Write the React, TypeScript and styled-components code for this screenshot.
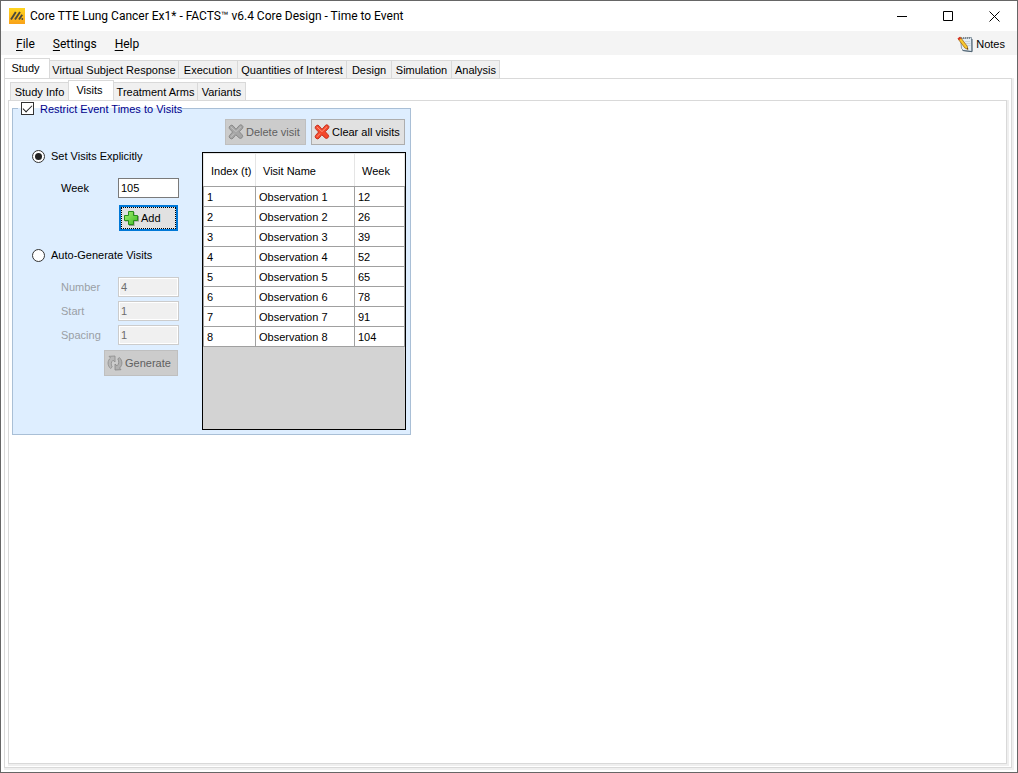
import React, { useState } from "react";
import styled, { createGlobalStyle } from "styled-components";

const GlobalStyle = createGlobalStyle`
  *, *::before, *::after { box-sizing: border-box; }
  body { margin: 0; background: #fff; }
  button, input, table { font: inherit; color: inherit; }
`;

const Window = styled.div`
  display: flex;
  flex-direction: column;
  min-height: 100vh;
  border: 1px solid #666;
  background: #fff;
  color: #000;
  font: 11px/16px "Liberation Sans", Arial, sans-serif;
`;

const TitleBar = styled.header`
  display: flex;
  align-items: center;
  height: 30px;
  padding-left: 8px;
`;

const Title = styled.h1`
  flex: 1;
  margin: 0 0 0 5px;
  font: 400 12px/16px Roboto, "Segoe UI", sans-serif;
  white-space: nowrap;
`;

const WindowControls = styled.div`
  display: flex;
`;

const WindowButton = styled.button`
  display: grid;
  place-items: center;
  width: 46px;
  height: 30px;
  padding: 0;
  border: 0;
  background: none;
`;

const MenuBar = styled.nav`
  display: flex;
  align-items: center;
  gap: 18px;
  height: 24px;
  padding: 2px 12px 0 15px;
  background: #f4f4f4;
`;

const MenuButton = styled.button`
  padding: 0;
  border: 0;
  background: none;
  font: 12px/16px Roboto, "Segoe UI", sans-serif;
  white-space: nowrap;

  u { text-underline-offset: 2px; }
`;

const NotesButton = styled.button`
  display: flex;
  align-items: center;
  gap: 3px;
  margin-left: auto;
  padding: 0;
  border: 0;
  background: none;
`;

const Workspace = styled.main`
  display: flex;
  flex: 1;
  flex-direction: column;
  padding: 3px 5px 4px 3px;
`;

const TabList = styled.div<{ $inset?: boolean }>`
  display: flex;
  align-items: flex-end;
  height: 21px;
  margin-bottom: -1px;
  padding-left: ${(p) => (p.$inset ? 2 : 0)}px;
`;

const TabButton = styled.button<{ $active: boolean; $width: number }>`
  width: ${(p) => p.$width}px;
  height: ${(p) => (p.$active ? 21 : 19)}px;
  margin-right: -1px;
  padding: ${(p) => (p.$active ? "0 3px 2px 0" : "0")};
  border: 1px solid #d9d9d9;
  border-bottom-color: ${(p) => (p.$active ? "#fff" : "#d9d9d9")};
  background: ${(p) => (p.$active ? "#fff" : "#f0f0f0")};
  line-height: 16px;
  white-space: nowrap;
`;

const TabPanel = styled.section<{ $outer?: boolean }>`
  display: flex;
  flex: 1;
  flex-direction: column;
  align-items: ${(p) => (p.$outer ? "stretch" : "flex-start")};
  padding: ${(p) => (p.$outer ? "1px 4px 3px 3px" : "0 3px")};
  border: 1px solid #d9d9d9;
  box-shadow: 1px 1px 0 1px #efefef;
  background: #fff;
`;

const VisitsGroup = styled.fieldset`
  display: flex;
  margin: 0;
  padding: 3px 4px 4px 0;
  border: 1px solid #a9bfd6;
  background: #deeeff;
`;

const GroupLegend = styled.legend`
  height: 15px;
  margin-left: 5px;
  padding: 0 0 0 3px;
  color: #00008b;
`;

const CheckLabel = styled.label`
  display: flex;
  align-items: center;
  gap: 6px;
  height: 15px;
`;

const CheckBox = styled.input`
  appearance: none;
  display: grid;
  place-items: center;
  width: 13px;
  height: 13px;
  margin: 0;
  border: 1px solid #333;
  background: #fff;

  &:checked::after {
    content: "";
    width: 9px;
    height: 5px;
    margin-bottom: 3px;
    border: solid #222;
    border-width: 0 0 1px 1px;
    transform: rotate(-45deg);
  }
`;

const Settings = styled.div`
  width: 189px;
  padding: 28px 23px 0 19px;
`;

const RadioLabel = styled.label`
  display: flex;
  align-items: center;
  gap: 6px;
  height: 18px;
`;

const Radio = styled.input`
  appearance: none;
  display: grid;
  place-items: center;
  width: 13px;
  height: 13px;
  margin: 0;
  border: 1px solid #333;
  border-radius: 50%;
  background: #fff;

  &:checked::after {
    content: "";
    width: 7px;
    height: 7px;
    border-radius: 50%;
    background: #222;
  }
`;

const FieldGroup = styled.div`
  display: flex;
  flex-direction: column;
  gap: 4px;
  margin-top: 13px;
  padding-left: 29px;
`;

const FieldRow = styled.div`
  display: flex;
  align-items: center;
`;

const FieldLabel = styled.label<{ $disabled?: boolean }>`
  flex: 1;
  color: ${(p) => (p.$disabled ? "#9a9fa5" : "#000")};
`;

const TextBox = styled.input`
  width: 61px;
  height: 20px;
  padding: 0 2px;
  border: 1px solid #7a7a7a;
  background: #fff;

  &:disabled {
    border-color: #ccc;
    background: #f0f0f0;
    box-shadow: inset 0 0 0 1px #fff;
    color: #6d6d6d;
  }
`;

const ActionRow = styled.div<{ $top: number; $bottom?: number }>`
  display: flex;
  justify-content: flex-end;
  margin: ${(p) => p.$top}px 0 ${(p) => p.$bottom ?? 0}px;
  padding-right: 1px;
`;

const ActionButton = styled.button<{ $width: number; $focused?: boolean }>`
  display: flex;
  align-items: center;
  gap: 2px;
  width: ${(p) => p.$width}px;
  height: 26px;
  padding: 0 2px;
  border: ${(p) => (p.$focused ? "2px solid #0078d7" : "1px solid #adadad")};
  outline: ${(p) => (p.$focused ? "1px dotted #000" : "none")};
  outline-offset: -3px;
  background: #e1e1e1;
  white-space: nowrap;

  &:disabled {
    border-color: #bfbfbf;
    background: #ccc;
    color: #606060;
  }
`;

const VisitList = styled.div`
  width: 204px;
`;

const Toolbar = styled.div`
  display: flex;
  justify-content: flex-end;
  gap: 5px;
  margin-bottom: 7px;
  padding-right: 1px;
`;

const GridFrame = styled.div`
  min-height: 278px;
  border: 1px solid #000;
  background: #d3d3d3;
`;

const VisitTable = styled.table`
  width: 100%;
  border-collapse: collapse;
  table-layout: fixed;
  background: #fff;
`;

const HeaderCell = styled.th<{ $width: number }>`
  width: ${(p) => p.$width}px;
  height: 33px;
  padding: 2px 0 0 7px;
  border: 1px solid #e5e5e5;
  border-bottom-color: #a0a0a0;
  font-weight: 400;
  text-align: left;
  white-space: nowrap;
`;

const Cell = styled.td`
  height: 20px;
  padding: 0 0 0 3px;
  border: 1px solid #a0a0a0;
`;

const Logo = () => (
  <svg width="16" height="16" viewBox="0 0 16 16" aria-hidden="true">
    <defs>
      <linearGradient id="logo" x1="0" y1="0" x2="0" y2="1">
        <stop offset="0" stopColor="#ffd51e" />
        <stop offset="1" stopColor="#f9a21a" />
      </linearGradient>
    </defs>
    <rect width="16" height="16" fill="url(#logo)" />
    <path d="M2 11.500 6.800 4M6 11.500 11 4M10 11.500l3.200-4.800" stroke="#4b4a3c" strokeWidth="1.900" />
    <circle cx="13.300" cy="11" r="0.900" fill="#4b4a3c" />
  </svg>
);

const NotesIcon = () => (
  <svg width="16" height="17" viewBox="0 0 16 17" aria-hidden="true">
    <path d="M3.500 2.500 14.500 1.500l.5 14-8.500-1-2-2z" fill="#e5edf3" stroke="#8797a3" />
    <path d="M5.500 14.500l9.500 1.200V3" fill="none" stroke="#4f6373" />
    <path d="M4.500 1v2M6.500 1v2M8.500 1v2M10.500 1v2M12.500 1v2" stroke="#6c7880" strokeWidth="0.8" />
    <path d="M8 5.500h5M8.500 7.500h5M10 9.500h3.500" stroke="#c1ced8" strokeWidth="0.8" />
    <path d="M1 2.800 3.200 1l7 9.200.8 3.300-3.200-1.600z" fill="#f7c92f" stroke="#a46a15" strokeWidth="0.8" />
    <path d="M.6 2.600 2.800.7l1.300 1.700-2.200 1.800z" fill="#d9332b" />
    <path d="m9.800 12.300 1.200 1.300-.3-1.700z" fill="#222" />
  </svg>
);

const CrossIcon = ({ muted }: { muted?: boolean }) => (
  <svg width="16" height="16" viewBox="0 0 16 16" aria-hidden="true">
    <path
      d="M2.500 1.500Q4 .5 5.200 2L8 5.300 11.500 1.300Q12.700.2 14 1.300q1.800 1.400.6 2.900L11.300 7.700l2.900 3.200q1.200 1.500-.2 2.800-1.600 1.400-2.800.2L7.800 10.800 5 14.200Q3.700 15.500 2.200 14.400.3 13 1.500 11.500L4.600 8 1.400 4.600Q.4 3 2.500 1.500z"
      fill={muted ? "#a6a6a6" : "#f4482c"}
      stroke={muted ? "#858585" : "#c02a18"}
      strokeWidth="0.9"
    />
    <path d="M2.800 3 8 7.600 13 2.700M3 12.800l3-3.200" fill="none" stroke={muted ? "#c2c2c2" : "#ff9277"} />
  </svg>
);

const PlusIcon = () => (
  <svg width="16" height="16" viewBox="0 0 16 16" aria-hidden="true">
    <defs>
      <linearGradient id="plus" x1="0" y1="0" x2="1" y2="1">
        <stop offset="0" stopColor="#a6ef72" />
        <stop offset="1" stopColor="#3dbb24" />
      </linearGradient>
    </defs>
    <path d="M6 2h5.500v4H16v5.500h-4.500V16H6v-4.500H2V6h4z" fill="#8f9a8c" />
    <path d="M5.500 1.500h5v4h4v5h-4v4h-5v-4h-4v-5h4z" fill="url(#plus)" stroke="#278c1b" strokeLinejoin="round" />
  </svg>
);

const CycleIcon = () => (
  <svg width="16" height="16" viewBox="0 0 16 16" aria-hidden="true">
    <path
      d="M3.600 13.500C.2 10.500.3 5.500 3.500 3L2 1.300 8 1v6L6 5.200C4 7 3.700 9.500 5.200 12z"
      fill="#b8b8b8" stroke="#8b8b8b" strokeWidth="0.8"
    />
    <path
      d="M12.300 2.500c3.500 3 3.400 8 .2 10.500l1.500 1.700-6 .3V9l2 1.800c2-1.800 2.300-4.300.8-6.800z"
      fill="#b0b0b0" stroke="#858585" strokeWidth="0.8"
    />
  </svg>
);

const studyTabs = [
  { label: "Study", width: 46 },
  { label: "Virtual Subject Response", width: 130 },
  { label: "Execution", width: 60 },
  { label: "Quantities of Interest", width: 110 },
  { label: "Design", width: 46 },
  { label: "Simulation", width: 61 },
  { label: "Analysis", width: 49 },
];

const detailTabs = [
  { label: "Study Info", width: 59 },
  { label: "Visits", width: 46 },
  { label: "Treatment Arms", width: 85 },
  { label: "Variants", width: 49 },
];

const visitWeeks = [12, 26, 39, 52, 65, 78, 91, 104];

const autoFields = [
  { id: "number", label: "Number", value: "4" },
  { id: "start", label: "Start", value: "1" },
  { id: "spacing", label: "Spacing", value: "1" },
];

type TabsProps = {
  label: string;
  items: { label: string; width: number }[];
  active: string;
  onSelect: (label: string) => void;
  inset?: boolean;
};

const Tabs = ({ label, items, active, onSelect, inset }: TabsProps) => (
  <TabList role="tablist" aria-label={label} $inset={inset}>
    {items.map((tab) => (
      <TabButton
        key={tab.label}
        type="button"
        role="tab"
        aria-selected={tab.label === active}
        $active={tab.label === active}
        $width={tab.width}
        onClick={() => onSelect(tab.label)}
      >
        {tab.label}
      </TabButton>
    ))}
  </TabList>
);

export default function App() {
  const [studyTab, setStudyTab] = useState("Study");
  const [detailTab, setDetailTab] = useState("Visits");
  const [mode, setMode] = useState("explicit");
  const auto = mode === "auto";

  return (
    <Window>
      <GlobalStyle />
      <TitleBar>
        <Logo />
        <Title>Core TTE Lung Cancer Ex1* - FACTS™ v6.4 Core Design - Time to Event</Title>
        <WindowControls>
          <WindowButton type="button" aria-label="Minimize">
            <svg width="11" height="11"><path d="M0 5.500h10" stroke="#000" /></svg>
          </WindowButton>
          <WindowButton type="button" aria-label="Maximize">
            <svg width="11" height="11"><path d="M.5.500h9v9h-9z" fill="none" stroke="#000" /></svg>
          </WindowButton>
          <WindowButton type="button" aria-label="Close">
            <svg width="11" height="11"><path d="m.5.500 10 10m0-10-10 10" stroke="#000" /></svg>
          </WindowButton>
        </WindowControls>
      </TitleBar>
      <MenuBar aria-label="Main menu">
        <MenuButton type="button"><u>F</u>ile</MenuButton>
        <MenuButton type="button"><u>S</u>ettings</MenuButton>
        <MenuButton type="button"><u>H</u>elp</MenuButton>
        <NotesButton type="button"><NotesIcon />Notes</NotesButton>
      </MenuBar>
      <Workspace>
        <Tabs label="Design sections" items={studyTabs} active={studyTab} onSelect={setStudyTab} />
        <TabPanel role="tabpanel" $outer>
          <Tabs label="Study sections" items={detailTabs} active={detailTab} onSelect={setDetailTab} inset />
          <TabPanel role="tabpanel">
            <VisitsGroup>
              <GroupLegend>
                <CheckLabel>
                  <CheckBox type="checkbox" defaultChecked />
                  Restrict Event Times to Visits
                </CheckLabel>
              </GroupLegend>
              <Settings>
                <RadioLabel>
                  <Radio type="radio" name="mode" checked={!auto} onChange={() => setMode("explicit")} />
                  Set Visits Explicitly
                </RadioLabel>
                <FieldGroup>
                  <FieldRow>
                    <FieldLabel htmlFor="week">Week</FieldLabel>
                    <TextBox id="week" defaultValue="105" />
                  </FieldRow>
                </FieldGroup>
                <ActionRow $top={7} $bottom={15}>
                  <ActionButton type="button" $width={59} $focused><PlusIcon />Add</ActionButton>
                </ActionRow>
                <RadioLabel>
                  <Radio type="radio" name="mode" checked={auto} onChange={() => setMode("auto")} />
                  Auto-Generate Visits
                </RadioLabel>
                <FieldGroup>
                  {autoFields.map((field) => (
                    <FieldRow key={field.id}>
                      <FieldLabel htmlFor={field.id} $disabled={!auto}>{field.label}</FieldLabel>
                      <TextBox id={field.id} defaultValue={field.value} disabled={!auto} />
                    </FieldRow>
                  ))}
                </FieldGroup>
                <ActionRow $top={5}>
                  <ActionButton type="button" $width={74} disabled={!auto}><CycleIcon />Generate</ActionButton>
                </ActionRow>
              </Settings>
              <VisitList>
                <Toolbar>
                  <ActionButton type="button" $width={81} disabled><CrossIcon muted />Delete visit</ActionButton>
                  <ActionButton type="button" $width={94}><CrossIcon />Clear all visits</ActionButton>
                </Toolbar>
                <GridFrame>
                  <VisitTable>
                    <thead>
                      <tr>
                        <HeaderCell $width={52}>Index (t)</HeaderCell>
                        <HeaderCell $width={99}>Visit Name</HeaderCell>
                        <HeaderCell $width={50}>Week</HeaderCell>
                      </tr>
                    </thead>
                    <tbody>
                      {visitWeeks.map((week, i) => (
                        <tr key={week}>
                          <Cell>{i + 1}</Cell>
                          <Cell>Observation {i + 1}</Cell>
                          <Cell>{week}</Cell>
                        </tr>
                      ))}
                    </tbody>
                  </VisitTable>
                </GridFrame>
              </VisitList>
            </VisitsGroup>
          </TabPanel>
        </TabPanel>
      </Workspace>
    </Window>
  );
}
